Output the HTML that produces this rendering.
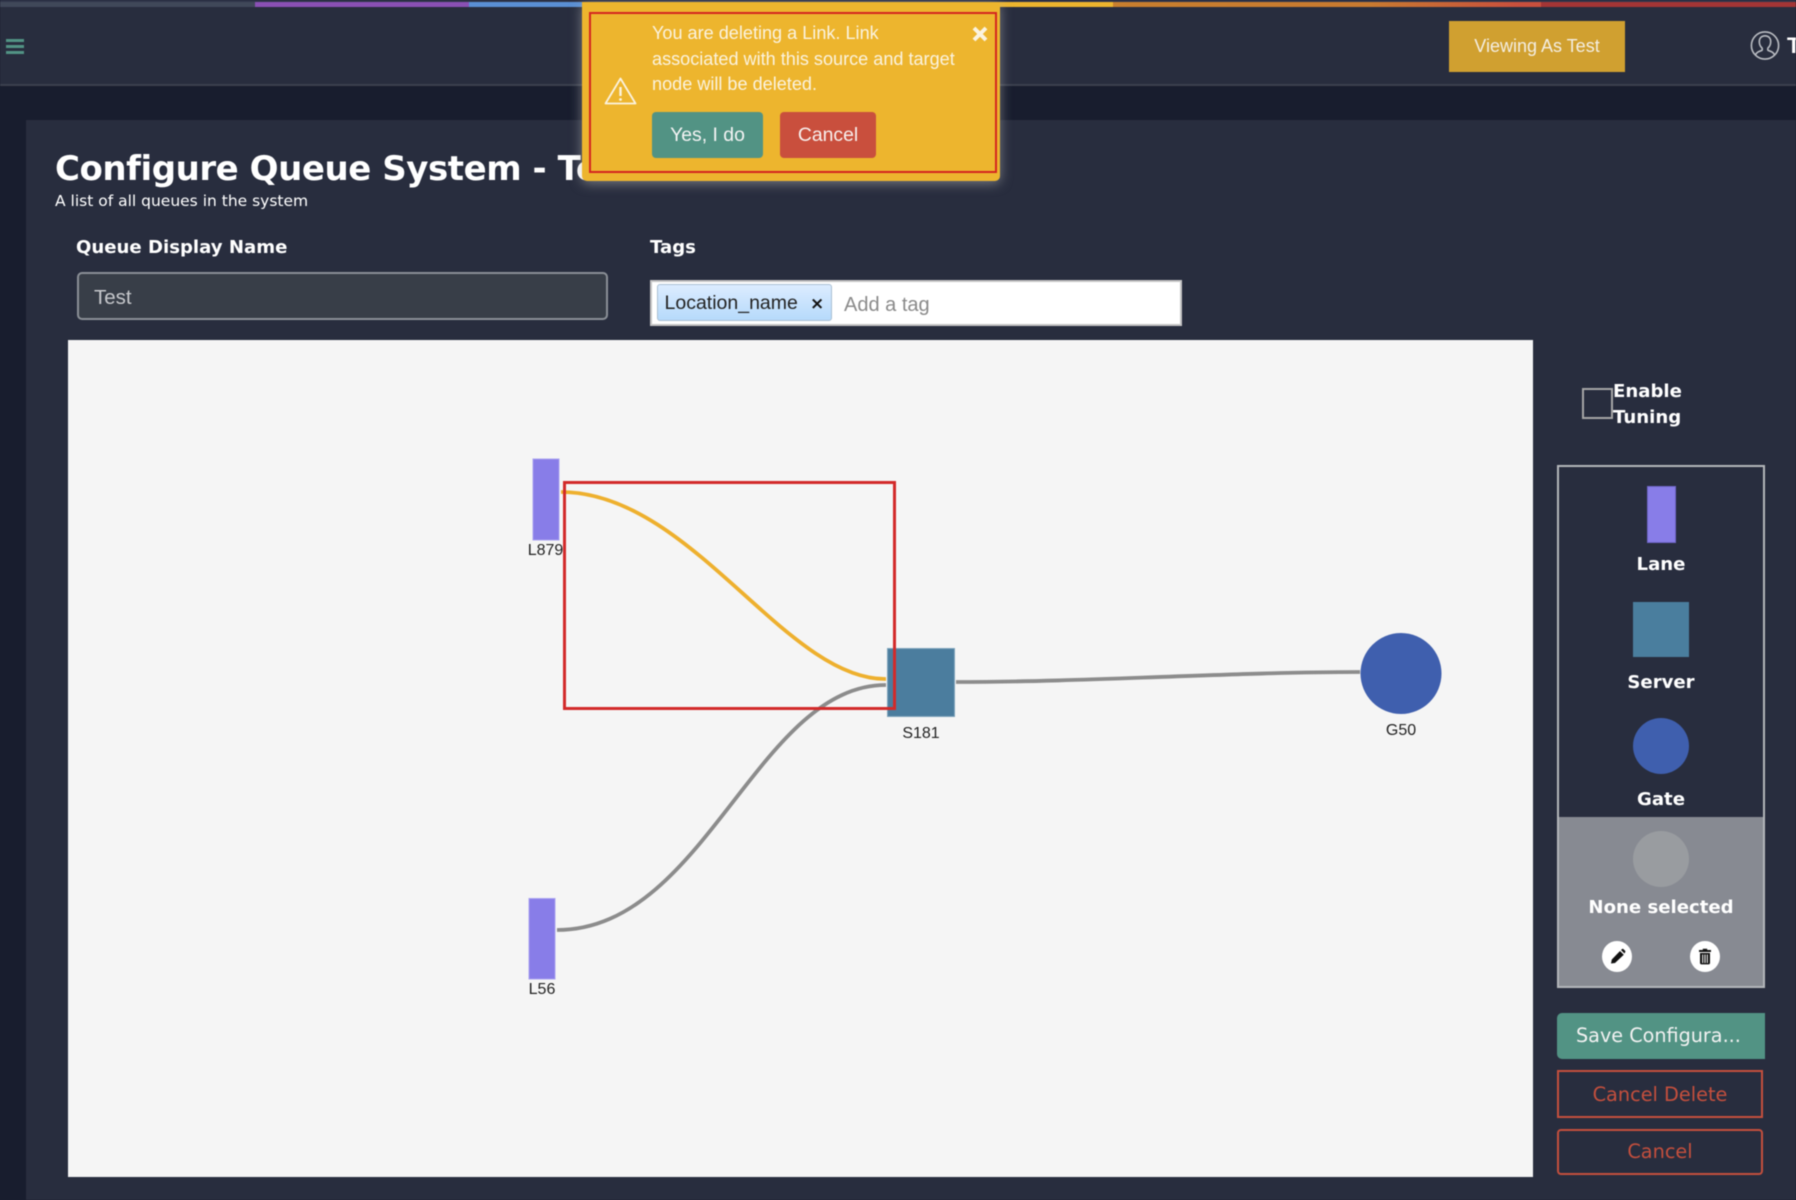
<!DOCTYPE html>
<html>
<head>
<meta charset="utf-8">
<title>Configure Queue System</title>
<style>
html,body{margin:0;padding:0;width:1796px;height:1200px;overflow:hidden;background:#181d2e;}
#w{position:absolute;left:0;top:0;width:1796px;height:1200px;overflow:hidden;filter:blur(0.45px);font-family:"Liberation Sans",sans-serif;}
#w div,#w span.a{position:absolute;box-sizing:border-box;white-space:nowrap;}
.dj{font-family:"DejaVu Sans",sans-serif;}
.b{font-family:"DejaVu Sans",sans-serif;font-weight:bold;color:#fff;font-size:18.1px;}
.c{text-align:center;}
</style>
</head>
<body>
<div id="w">
  <div style="left:0;top:0;width:1796px;height:86px;background:#282d3e;border-bottom:2px solid #3b404e;"></div>
  <div style="left:0;top:0;width:1796px;height:2px;background:#30354a;"></div>
  <div style="left:0;top:2px;width:255px;height:4.5px;background:#404859;"></div>
  <div style="left:255px;top:2px;width:214px;height:4.5px;background:#8a50b4;"></div>
  <div style="left:469px;top:2px;width:120px;height:4.5px;background:#5a8fd4;"></div>
  <div style="left:1000px;top:2px;width:113px;height:4.5px;background:#edb52e;"></div>
  <div style="left:1113px;top:2px;width:428px;height:4.5px;background:linear-gradient(90deg,#c87f2e,#c87a30 60%,#c94f3d 95%);"></div>
  <div style="left:1541px;top:2px;width:255px;height:4.5px;background:#a33535;"></div>

  <div style="left:6px;top:39px;width:18px;height:3px;background:#529384;"></div>
  <div style="left:6px;top:45px;width:18px;height:3px;background:#529384;"></div>
  <div style="left:6px;top:50.5px;width:18px;height:3px;background:#529384;"></div>

  <div class="c" style="left:1449px;top:20.5px;width:176px;height:51.5px;background:#d0a030;color:#f4eee2;font-size:18px;line-height:51px;">Viewing As Test</div>
  <svg style="position:absolute;left:1750px;top:30px" width="30" height="31" viewBox="0 0 30 31" fill="none" stroke="#b9bcc2" stroke-width="1.6">
    <circle cx="15" cy="15.5" r="13.6"/>
    <path d="M5.5 25c1-3 3.6-3.6 6.4-4.6 .5-.7.4-1.6.1-2.4-1.800-1.600-2.700-4-2.700-6.500 0-3.400 2.200-5.700 5.700-5.700s5.700 2.300 5.700 5.700c0 2.500-.9 4.900-2.700 6.500-.3.8-.4 1.700.1 2.400 2.800 1 5.400 1.600 6.400 4.600"/>
  </svg>
  <div style="left:1787px;top:33px;color:#fff;font-size:22px;font-weight:bold;line-height:26px;">T</div>

  <div style="left:26px;top:120px;width:1770px;height:1080px;background:#282d3e;"></div>
  <div class="b" style="left:55px;top:147.5px;font-size:34px;line-height:42px;letter-spacing:-0.45px;">Configure Queue System - Test</div>
  <div class="dj" style="left:55px;top:191px;font-size:15.5px;line-height:20px;color:#fff;">A list of all queues in the system</div>
  <div class="b" style="left:76px;top:236px;line-height:24px;">Queue Display Name</div>
  <div class="b" style="left:650px;top:236px;line-height:24px;">Tags</div>

  <div style="left:77px;top:272px;width:531px;height:48px;background:#383e48;border:2px solid #8a8f96;border-radius:5px;color:#c6c8cc;font-size:20.5px;line-height:47.5px;padding-left:15px;">Test</div>

  <div style="left:650px;top:279.5px;width:532px;height:46.5px;background:#fff;border:2px solid #c4c4c4;"></div>
  <div style="left:656.5px;top:284px;width:175.5px;height:37px;background:linear-gradient(180deg,#dcecff,#b6dafb);border:1px solid #a9bfd3;border-radius:3px;color:#222;font-size:19.5px;line-height:36px;padding-left:7px;">Location_name</div>
  <div class="dj" style="left:810px;top:292px;font-size:17px;font-weight:bold;line-height:24px;color:#111;">×</div>
  <div style="left:844px;top:291px;font-size:20px;line-height:28px;color:#8a8a8a;">Add a tag</div>

  <div style="left:68px;top:340px;width:1465px;height:837px;background:#f5f5f5;"></div>
  <svg style="position:absolute;left:0;top:0" width="1796" height="1200" viewBox="0 0 1796 1200" fill="none">
    <path d="M557 930C705 930 757 685 886 685" stroke="#8c8c8c" stroke-width="3.800"/>
    <path d="M956 682C1090 682 1230 672 1360 672" stroke="#8c8c8c" stroke-width="3.800"/>
    <path d="M561 492C691 492 785 680 886 679" stroke="#eeb02e" stroke-width="3.800"/>
    <rect x="533" y="459" width="26" height="81" fill="#887de8" stroke="#a9a2f0" stroke-width="1"/>
    <rect x="529" y="898.500" width="26" height="80.500" fill="#887de8" stroke="#a9a2f0" stroke-width="1"/>
    <rect x="887.500" y="648.500" width="67" height="68" fill="#4b7d9e" stroke="#7ea3bb" stroke-width="1"/>
    <circle cx="1401" cy="673.500" r="40.500" fill="#3f5fae"/>
    <rect x="564.500" y="482.500" width="330" height="226" stroke="#d22a2a" stroke-width="3"/>
    <text x="545.500" y="555" font-family="Liberation Sans" font-size="16" text-anchor="middle" fill="#222">L879</text>
    <text x="542" y="994" font-family="Liberation Sans" font-size="16" text-anchor="middle" fill="#222">L56</text>
    <text x="921" y="738" font-family="Liberation Sans" font-size="16" text-anchor="middle" fill="#222">S181</text>
    <text x="1401" y="735" font-family="Liberation Sans" font-size="16" text-anchor="middle" fill="#222">G50</text>
  </svg>

  <div style="left:1582px;top:388px;width:31px;height:31px;border:2px solid #a5a5a5;"></div>
  <div class="b" style="left:1613px;top:379px;line-height:26px;">Enable<br>Tuning</div>

  <div style="left:1557px;top:465px;width:208px;height:523px;border:2px solid #b4b6ba;"></div>
  <div style="left:1647px;top:485.5px;width:29px;height:57px;background:#887de8;border:1px solid #6f65c8;"></div>
  <div class="b c" style="left:1559px;top:553px;width:204px;line-height:24px;">Lane</div>
  <div style="left:1633px;top:602px;width:56px;height:55px;background:#4a7e9e;"></div>
  <div class="b c" style="left:1559px;top:671px;width:204px;line-height:24px;">Server</div>
  <div style="left:1633px;top:718px;width:56px;height:56px;border-radius:50%;background:#3f5fae;"></div>
  <div class="b c" style="left:1559px;top:787.5px;width:204px;line-height:24px;">Gate</div>

  <div style="left:1559px;top:817px;width:204px;height:169px;background:#878a92;"></div>
  <div style="left:1633px;top:831px;width:56px;height:56px;border-radius:50%;background:#999ca0;"></div>
  <div class="b c" style="left:1559px;top:896px;width:204px;line-height:24px;">None selected</div>
  <div style="left:1602px;top:941px;width:30px;height:31px;border-radius:50%;background:#fff;"></div>
  <div style="left:1690px;top:941px;width:30px;height:31px;border-radius:50%;background:#fff;"></div>
  <svg style="position:absolute;left:1602px;top:941px" width="30" height="31" viewBox="0 0 30 31">
    <path d="M9 22.500l.8-4L18 10l3.800 3.800L13 22z" fill="#111"/>
    <path d="M19 9l1-.9c.5-.4 1-.4 1.400 0l1.700 1.700c.4.400.4 1 0 1.400L22.500 12.500z" fill="#111"/>
  </svg>
  <svg style="position:absolute;left:1690px;top:941px" width="30" height="31" viewBox="0 0 30 31">
    <path d="M12.800 9V7.800h4.400V9H21v2H9V9z" fill="#111"/>
    <path d="M10 12h10v10c0 .8-.6 1.400-1.400 1.400h-7.200c-.8 0-1.400-.6-1.400-1.400z" fill="#111"/>
    <path d="M12.700 13.500v8.500M15 13.500v8.500M17.300 13.500v8.500" stroke="#fff" stroke-width="1"/>
  </svg>

  <div class="dj" style="left:1557px;top:1013px;width:208px;height:46px;background:#529384;border-radius:5px 0 0 5px;color:#f2f2f2;font-size:19.2px;line-height:45px;padding-left:19px;">Save Configura...</div>
  <div class="dj c" style="left:1557px;top:1070px;width:206px;height:48px;border:2px solid #c44f3d;color:#c44f3d;font-size:19.3px;line-height:45px;">Cancel Delete</div>
  <div class="dj c" style="left:1557px;top:1129px;width:206px;height:46px;border:2px solid #c44f3d;border-radius:4px;color:#c44f3d;font-size:19.3px;line-height:42px;">Cancel</div>

  <div style="left:582px;top:2px;width:418px;height:178.5px;background:#edb52e;border-radius:0 0 5px 5px;box-shadow:0 2px 12px rgba(190,190,190,.55);z-index:5;">
    <div style="left:7px;top:10px;width:408px;height:160.5px;border:2.500px solid #d4251f;"></div>
    <div style="left:70px;top:19px;color:#fbf3df;font-size:18.1px;line-height:25.500px;">You are deleting a Link. Link<br>associated with this source and target<br>node will be deleted.</div>
    <svg style="position:absolute;left:21px;top:74px" width="35" height="30" viewBox="0 0 35 30" fill="none">
      <path d="M17.500 2.500L32.500 27.500H2.500z" stroke="#fbf3df" stroke-width="1.800" stroke-linejoin="round"/>
      <path d="M17.500 11v9" stroke="#fbf3df" stroke-width="2.400"/>
      <circle cx="17.500" cy="23.500" r="1.400" fill="#fbf3df"/>
    </svg>
    <svg style="position:absolute;left:390px;top:24px" width="16" height="16" viewBox="0 0 16 16">
      <path d="M2 2L14 14M14 2L2 14" stroke="#fbf3df" stroke-width="4"/>
    </svg>
    <div class="c" style="left:70px;top:110px;width:111px;height:46px;background:#529384;border-radius:4px;color:#f4f4f4;font-size:19.4px;line-height:47px;">Yes, I do</div>
    <div class="c" style="left:198px;top:110px;width:96px;height:46px;background:#c94f3d;border-radius:4px;color:#f8f0ee;font-size:19.4px;line-height:47px;">Cancel</div>
  </div>
</div>
</body>
</html>
